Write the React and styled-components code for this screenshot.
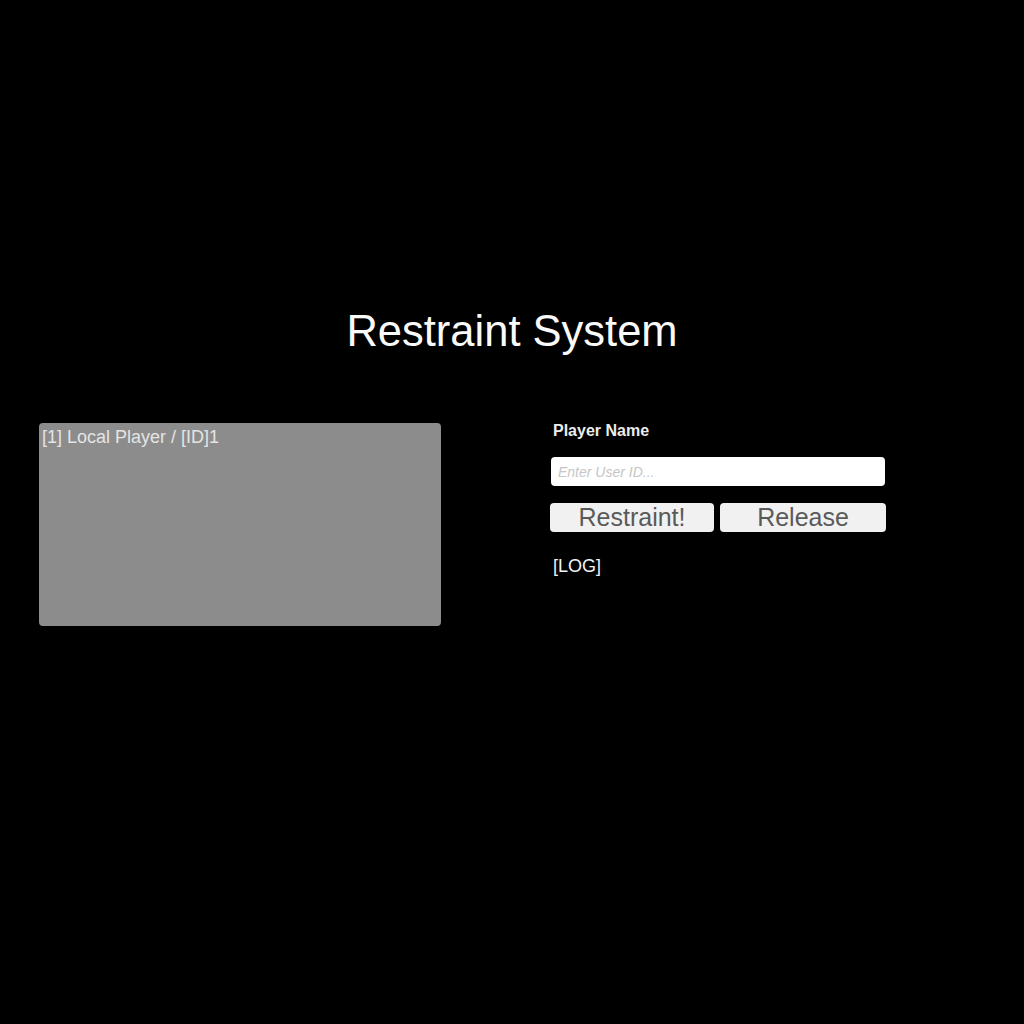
import React from "react";
import styled, { createGlobalStyle } from "styled-components";

const Global = createGlobalStyle`
  html, body { margin: 0; padding: 0; background: #000; }
  body { font-family: "Liberation Sans", Arial, sans-serif; }
  * { box-sizing: border-box; }
`;

const Screen = styled.div`
  width: 1024px;
  height: 1024px;
  background: #000;
  padding-top: 306px;
  display: flex;
  flex-direction: column;
`;

const Title = styled.h1`
  margin: 0;
  font-size: 43.5px;
  line-height: 50px;
  font-weight: 400;
  color: #fafafa;
  text-align: center;
`;

const Content = styled.div`
  display: flex;
  align-items: flex-start;
  padding-left: 39px;
  margin-top: 64px;
  gap: 109px;
`;

const PlayerPanel = styled.div`
  width: 402px;
  height: 203px;
  margin-top: 3px;
  background: #8c8c8c;
  border-radius: 4px;
  padding: 4px 3px;
`;

const PlayerEntry = styled.div`
  font-size: 18px;
  line-height: 20px;
  color: #e4e4e4;
`;

const Controls = styled.div`
  width: 336px;
  display: flex;
  flex-direction: column;
  padding-top: 1px;
`;

const Label = styled.div`
  font-size: 16px;
  line-height: 20px;
  font-weight: 700;
  color: #ececec;
  padding-left: 3px;
`;

const Input = styled.input`
  margin: 16px 1px 0;
  height: 29px;
  border: none;
  border-radius: 4px;
  background: #fff;
  padding: 0 7px;
  font-family: "Liberation Sans", Arial, sans-serif;
  font-size: 14px;
  font-style: italic;
  outline: none;
  &::placeholder { color: #c6c6c6; }
`;

const ButtonRow = styled.div`
  display: grid;
  grid-template-columns: 164px 166px;
  gap: 6px;
  margin-top: 17px;
`;

const ActionButton = styled.button`
  height: 29px;
  border: none;
  border-radius: 4px;
  background: #f1f1f1;
  color: #5a5a5a;
  font-family: "Liberation Sans", Arial, sans-serif;
  font-size: 25px;
  line-height: 29px;
  padding: 0;
  cursor: pointer;
`;

const Log = styled.div`
  margin-top: 23px;
  padding-left: 3px;
  font-size: 18px;
  line-height: 22px;
  color: #f2f2f2;
`;

export default function App() {
  return (
    <>
      <Global />
      <Screen>
        <Title>Restraint System</Title>
        <Content>
          <PlayerPanel>
            <PlayerEntry>[1] Local Player / [ID]1</PlayerEntry>
          </PlayerPanel>
          <Controls>
            <Label>Player Name</Label>
            <Input placeholder="Enter User ID..." />
            <ButtonRow>
              <ActionButton>Restraint!</ActionButton>
              <ActionButton>Release</ActionButton>
            </ButtonRow>
            <Log>[LOG]</Log>
          </Controls>
        </Content>
      </Screen>
    </>
  );
}
